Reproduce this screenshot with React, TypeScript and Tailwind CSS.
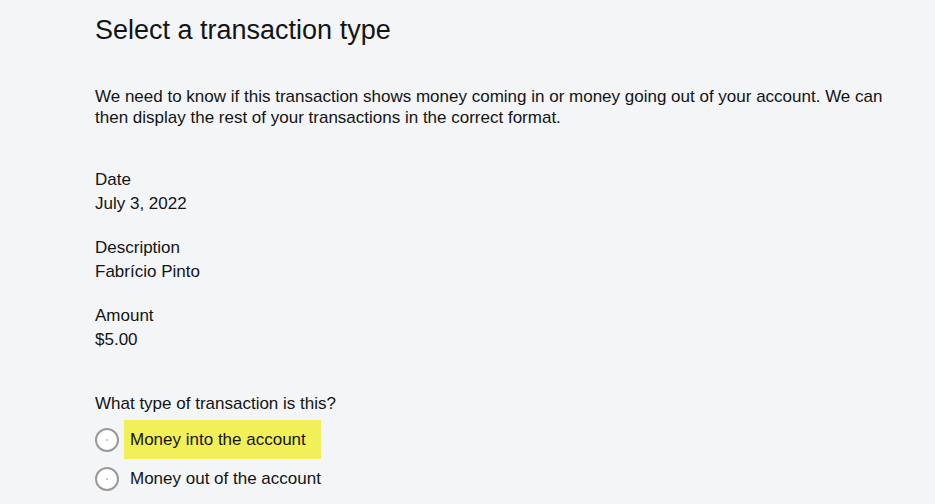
import { useState } from "react";

// Transaction details shown above the question
const DETAILS = [
  { label: "Date", value: "July 3, 2022" },
  { label: "Description", value: "Fabrício Pinto" },
  { label: "Amount", value: "$5.00" },
];

const OPTIONS = [
  { id: "in", label: "Money into the account" },
  { id: "out", label: "Money out of the account" },
];

export default function App() {
  const [selected, setSelected] = useState<string | null>(null);

  return (
    <div
      className="w-full min-h-screen bg-[#f3f5f7] text-[#141414]"
      style={{ fontFamily: '"Liberation Sans", Arial, sans-serif' }}
    >
      <div className="pl-[95px] pt-[14px] w-[935px]">
        <h1 className="text-[27px] leading-[32px]">Select a transaction type</h1>

        <p className="mt-[40px] text-[17px] leading-[21px] w-[805px]">
          We need to know if this transaction shows money coming in or money going out of your
          account. We can then display the rest of your transactions in the correct format.
        </p>

        {/* Details */}
        <div className="mt-[40px] flex flex-col gap-[20px]">
          {DETAILS.map((d) => (
            <div key={d.label} className="text-[17px] leading-[24px]">
              <div>{d.label}</div>
              <div>{d.value}</div>
            </div>
          ))}
        </div>

        {/* Question */}
        <div className="mt-[40px] text-[17px] leading-[24px]">What type of transaction is this?</div>
        <div className="mt-[4px] flex flex-col gap-0">
          {OPTIONS.map((o, i) => (
            <label
              key={o.id}
              className="flex items-center gap-[5px] cursor-pointer h-[39px]"
              onClick={() => setSelected(o.id)}
            >
              <span className="w-[24px] h-[24px] rounded-full border-2 border-[#9a9a9a] bg-white flex items-center justify-center shrink-0">
                <span
                  className={
                    selected === o.id
                      ? "w-[10px] h-[10px] rounded-full bg-[#444]"
                      : "w-[2px] h-[2px] rounded-full bg-[#bbb]"
                  }
                />
              </span>
              <span
                className={
                  i === 0
                    ? "h-[39px] flex items-center pl-[6px] pr-[15px] bg-[#f2ef58] text-[17px]"
                    : "h-[39px] flex items-center pl-[6px] pr-[15px] text-[17px]"
                }
              >
                {o.label}
              </span>
            </label>
          ))}
        </div>
      </div>
    </div>
  );
}
